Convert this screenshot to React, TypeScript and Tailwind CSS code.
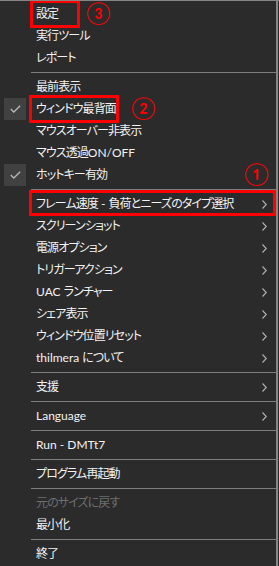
import React from "react";

type Item =
  | { kind: "sep" }
  | {
      kind: "item";
      label: string;
      checked?: boolean;
      arrow?: boolean;
      disabled?: boolean;
      mark?: "box1" | "box2" | "box3";
    };

const items: Item[] = [
  { kind: "item", label: "設定", mark: "box3" },
  { kind: "item", label: "実行ツール" },
  { kind: "item", label: "レポート" },
  { kind: "sep" },
  { kind: "item", label: "最前表示" },
  { kind: "item", label: "ウィンドウ最背面", checked: true, mark: "box2" },
  { kind: "item", label: "マウスオーバー非表示" },
  { kind: "item", label: "マウス透過ON/OFF" },
  { kind: "item", label: "ホットキー有効", checked: true, mark: "box1" },
  { kind: "sep" },
  { kind: "item", label: "フレーム速度 - 負荷とニーズのタイプ選択", arrow: true },
  { kind: "item", label: "スクリーンショット", arrow: true },
  { kind: "item", label: "電源オプション", arrow: true },
  { kind: "item", label: "トリガーアクション", arrow: true },
  { kind: "item", label: "UAC ランチャー", arrow: true },
  { kind: "item", label: "シェア表示", arrow: true },
  { kind: "item", label: "ウィンドウ位置リセット", arrow: true },
  { kind: "item", label: "thilmera について", arrow: true },
  { kind: "sep" },
  { kind: "item", label: "支援", arrow: true },
  { kind: "sep" },
  { kind: "item", label: "Language", arrow: true },
  { kind: "sep" },
  { kind: "item", label: "Run - DMTt7" },
  { kind: "sep" },
  { kind: "item", label: "プログラム再起動" },
  { kind: "sep" },
  { kind: "item", label: "元のサイズに戻す", disabled: true },
  { kind: "item", label: "最小化" },
  { kind: "sep" },
  { kind: "item", label: "終了" },
];

function Check() {
  return (
    <svg width="11" height="8" viewBox="0 0 11 8" fill="none">
      <polyline points="0.8,4 3.8,7 10.2,0.8" stroke="#b8b8b8" strokeWidth="1.3" />
    </svg>
  );
}

function Chevron() {
  return (
    <svg width="5" height="9" viewBox="0 0 5 9" fill="none">
      <polyline points="0.5,0.5 4.3,4.5 0.5,8.5" stroke="#b4b4b4" strokeWidth="1.1" />
    </svg>
  );
}

function Label({ text }: { text: string }) {
  const parts = text.match(/[\x00-\x7F]+|[^\x00-\x7F]+/g) || [];
  return (
    <>
      {parts.map((p, i) =>
        /^[\x00-\x7F]+$/.test(p) ? (
          <span key={i} className="tracking-normal">
            {p}
          </span>
        ) : (
          <span key={i} className="tracking-[-0.9px]">
            {p}
          </span>
        )
      )}
    </>
  );
}

export default function App() {
  return (
    <div
      className="w-[279px] h-[566px] overflow-hidden bg-[#2b2b2b] border-t border-[#858585] text-[12px] text-[#f2f2f2] [font-feature-settings:'palt']"
      style={{ fontFamily: 'Lato, "Noto Sans CJK JP", sans-serif' }}
    >
      <div className="w-[278px] h-full border-r-2 border-[#868686] pt-[2px] flex flex-col">
        {items.map((it, i) =>
          it.kind === "sep" ? (
            <div key={i} className="h-[7px] flex items-center pl-[31px]">
              <div className="h-px flex-1 bg-[#7d7d7d]" />
            </div>
          ) : (
            <div key={i} className="relative h-[22px] flex items-center pl-[4px] shrink-0">
              <div
                className={
                  "w-[22px] h-[22px] flex items-center justify-center " +
                  (it.checked ? "bg-[#414141]" : "")
                }
              >
                {it.checked ? <Check /> : null}
              </div>
              <div
                className={
                  "ml-[10px] flex-1 leading-none whitespace-nowrap " +
                  (it.disabled ? "text-[#6e6e6e]" : "")
                }
              >
                <Label text={it.label} />
              </div>
              {it.arrow ? (
                <div className="w-[5px] mr-[9px] flex items-center">
                  <Chevron />
                </div>
              ) : null}
              {it.mark === "box3" ? (
                <>
                  <div className="absolute left-[30px] top-[-3px] w-[50px] h-[28px] border-[3px] border-[#ff0000]" />
                  <div className="absolute left-[86px] top-[-1px] text-[22px] leading-none text-[#ff0000]">
                    ③
                  </div>
                </>
              ) : null}
              {it.mark === "box2" ? (
                <>
                  <div className="absolute left-[29px] top-[-3px] w-[90px] h-[28px] border-[3px] border-[#ff0000]" />
                  <div className="absolute left-[131px] top-[-1px] text-[22px] leading-none text-[#ff0000]">
                    ②
                  </div>
                </>
              ) : null}
              {it.mark === "box1" ? (
                <div className="absolute left-[244px] top-[-1px] text-[22px] leading-none text-[#ff0000]">
                  ①
                </div>
              ) : null}
              {it.label.startsWith("フレーム") ? (
                <div className="absolute left-[29px] top-[-3px] w-[247px] h-[26px] border-[3px] border-[#ff0000]" />
              ) : null}
            </div>
          )
        )}
      </div>
    </div>
  );
}
